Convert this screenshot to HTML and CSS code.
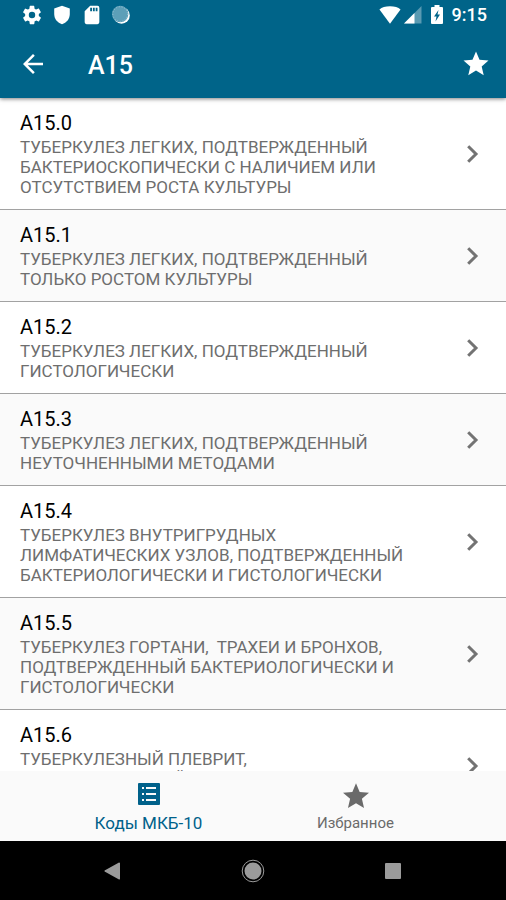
FILE: index.html
```html
<!DOCTYPE html>
<html lang="ru">
<head>
<meta charset="utf-8">
<meta name="viewport" content="width=device-width, initial-scale=1">
<title>A15</title>
<link rel="stylesheet" href="styles.css">
</head>
<body>
<header class="top">
  <div class="status">
    <div class="status-left">
      <svg class="status-icon" viewBox="0 0 24 24"><path d="M19.4 13c.04-.3.1-.65.1-1s-.06-.7-.1-1l2.1-1.65c.2-.15.25-.42.12-.64l-2-3.46c-.12-.22-.39-.3-.6-.22l-2.5 1c-.52-.4-1.08-.73-1.7-.98l-.37-2.65A.5.5 0 0 0 14 2h-4a.5.5 0 0 0-.5.42l-.37 2.65c-.62.25-1.18.58-1.7.98l-2.5-1a.5.5 0 0 0-.6.22l-2 3.46c-.13.22-.07.49.12.64L4.570 11c-.04.3-.07.65-.07 1s.03.7.07 1l-2.1 1.650c-.2.15-.25.42-.12.64l2 3.460c.12.22.39.3.6.22l2.5-1c.52.4 1.080.73 1.700.98l.37 2.650c.04.24.25.42.5.42h4c.25 0 .46-.18.5-.42l.37-2.650c.62-.25 1.180-.58 1.700-.98l2.500 1c.22.080.48 0 .6-.22l2-3.460c.13-.22.070-.49-.12-.64zM12 15.500a3.500 3.500 0 1 1 0-7 3.500 3.500 0 0 1 0 7z"/></svg>
      <svg class="status-icon" viewBox="0 0 24 24"><path d="M12 2 3.500 5v6c0 5.500 3.500 9.500 8.500 11 5-1.500 8.500-5.500 8.500-11V5z"/></svg>
      <svg class="status-icon" viewBox="0 0 24 24"><path d="M18 2h-8L4 8v12a2 2 0 0 0 2 2h12a2 2 0 0 0 2-2V4a2 2 0 0 0-2-2zm-6 6h-2V4h2zm3 0h-2V4h2zm3 0h-2V4h2z"/></svg>
      <svg class="status-icon" viewBox="3 2 24 24"><circle cx="14.500" cy="14.500" r="9"/><circle class="sync-disc" cx="13" cy="13" r="9"/><circle class="sync-ring" cx="13" cy="13" r="8"/></svg>
    </div>
    <div class="status-right">
      <svg class="signal-icon" viewBox="0 0 24 24"><path d="M12 21.500.5 6C3 3.800 7 2.500 12 2.500S21 3.800 23.500 6z"/></svg>
      <svg class="cell-icon" viewBox="0 0 18 18"><path class="faint" d="M17.500 0v17.500H0z"/><path d="M10.500 7v10.500H0z"/></svg>
      <svg class="battery-icon" viewBox="0 0 12 20"><path d="M3.500 0h5v2H11a1 1 0 0 1 1 1v15a1 1 0 0 1-1 1H1a1 1 0 0 1-1-1V3a1 1 0 0 1 1-1h2.500z"/><path class="bolt" d="M7.500 5 3 11.500h2.500L4.500 16.500 9 9.500H6.500z"/></svg>
      <span class="clock">9:15</span>
    </div>
  </div>
  <div class="appbar">
    <button class="icon-button" aria-label="Назад"><svg class="bar-icon" viewBox="0 0 24 24"><path d="M20 11H7.830l5.590-5.590L12 4l-8 8 8 8 1.410-1.410L7.830 13H20z"/></svg></button>
    <h1 class="title">A15</h1>
    <button class="icon-button" aria-label="В избранное"><svg class="bar-icon" viewBox="0 0 24 24"><path d="M12 17.270 18.180 21l-1.640-7.030L22 9.240l-7.190-.61L12 2 9.190 8.630 2 9.240l5.460 4.730L5.820 21z"/></svg></button>
  </div>
</header>

<main class="list">
  <a class="row" href="#a150"><div class="row-text"><div class="code">A15.0</div><div class="name">ТУБЕРКУЛЕЗ ЛЕГКИХ, ПОДТВЕРЖДЕННЫЙ БАКТЕРИОСКОПИЧЕСКИ С НАЛИЧИЕМ ИЛИ ОТСУТСТВИЕМ РОСТА КУЛЬТУРЫ</div></div><svg class="chevron" viewBox="0 0 12 18"><path d="m1.200 1.200 7.800 7.800-7.800 7.800"/></svg></a>
  <a class="row" href="#a151"><div class="row-text"><div class="code">A15.1</div><div class="name">ТУБЕРКУЛЕЗ ЛЕГКИХ, ПОДТВЕРЖДЕННЫЙ ТОЛЬКО РОСТОМ КУЛЬТУРЫ</div></div><svg class="chevron" viewBox="0 0 12 18"><path d="m1.200 1.200 7.800 7.800-7.800 7.800"/></svg></a>
  <a class="row" href="#a152"><div class="row-text"><div class="code">A15.2</div><div class="name">ТУБЕРКУЛЕЗ ЛЕГКИХ, ПОДТВЕРЖДЕННЫЙ ГИСТОЛОГИЧЕСКИ</div></div><svg class="chevron" viewBox="0 0 12 18"><path d="m1.200 1.200 7.800 7.800-7.800 7.800"/></svg></a>
  <a class="row" href="#a153"><div class="row-text"><div class="code">A15.3</div><div class="name">ТУБЕРКУЛЕЗ ЛЕГКИХ, ПОДТВЕРЖДЕННЫЙ НЕУТОЧНЕННЫМИ МЕТОДАМИ</div></div><svg class="chevron" viewBox="0 0 12 18"><path d="m1.200 1.200 7.800 7.800-7.800 7.800"/></svg></a>
  <a class="row" href="#a154"><div class="row-text"><div class="code">A15.4</div><div class="name">ТУБЕРКУЛЕЗ ВНУТРИГРУДНЫХ ЛИМФАТИЧЕСКИХ УЗЛОВ, ПОДТВЕРЖДЕННЫЙ БАКТЕРИОЛОГИЧЕСКИ И ГИСТОЛОГИЧЕСКИ</div></div><svg class="chevron" viewBox="0 0 12 18"><path d="m1.200 1.200 7.800 7.800-7.800 7.800"/></svg></a>
  <a class="row" href="#a155"><div class="row-text"><div class="code">A15.5</div><div class="name">ТУБЕРКУЛЕЗ ГОРТАНИ,  ТРАХЕИ И БРОНХОВ, ПОДТВЕРЖДЕННЫЙ БАКТЕРИОЛОГИЧЕСКИ И ГИСТОЛОГИЧЕСКИ</div></div><svg class="chevron" viewBox="0 0 12 18"><path d="m1.200 1.200 7.800 7.800-7.800 7.800"/></svg></a>
  <a class="row" href="#a156"><div class="row-text"><div class="code">A15.6</div><div class="name">ТУБЕРКУЛЕЗНЫЙ ПЛЕВРИТ, ПОДТВЕРЖДЕННЫЙ БАКТЕРИОЛОГИЧЕСКИ И ГИСТОЛОГИЧЕСКИ</div></div><svg class="chevron" viewBox="0 0 12 18"><path d="m1.200 1.200 7.800 7.800-7.800 7.800"/></svg></a>
</main>

<nav class="tabs">
  <a class="tab tab-active" href="#codes"><svg class="tab-icon" viewBox="0 0 26 26"><path fill-rule="evenodd" d="M3 1h20a1 1 0 0 1 1 1v20a1 1 0 0 1-1 1H3a1 1 0 0 1-1-1V2a1 1 0 0 1 1-1zM6 5v2h2V5zm4 0v2h10V5zm-4 6v2h2v-2zm4 0v2h10v-2zm-4 6v2h2v-2zm4 0v2h10v-2z"/></svg><span>Коды МКБ-10</span></a>
  <a class="tab" href="#favourites"><svg class="tab-icon" viewBox="2 1 20 20"><path d="M12 17.270 18.180 21l-1.640-7.030L22 9.240l-7.190-.61L12 2 9.190 8.630 2 9.240l5.460 4.730L5.820 21z"/></svg><span>Избранное</span></a>
</nav>

<footer class="system">
  <button class="key" aria-label="Назад"><svg class="key-icon" viewBox="0 0 24 24"><path d="M19 4v16a1 1 0 0 1-1 .5L4.500 13a1 1 0 0 1 0-2L18 3.500a1 1 0 0 1 1 .5z"/></svg></button>
  <button class="key" aria-label="Домой"><svg class="key-icon" viewBox="0 0 24 24"><circle cx="12" cy="12" r="8.500"/><circle class="key-ring" cx="12" cy="12" r="10.800"/></svg></button>
  <button class="key" aria-label="Обзор"><svg class="key-icon" viewBox="0 0 24 24"><rect x="4" y="4" width="16" height="16" rx="1"/></svg></button>
</footer>
</body>
</html>
```
FILE: styles.css
```css
* {
  box-sizing: border-box;
}

body {
  margin: 0;
  height: 100vh;
  display: flex;
  flex-direction: column;
  overflow: hidden;
  background: #fff;
  font-family: Roboto, "Liberation Sans", sans-serif;
}

svg {
  display: block;
  flex: none;
  fill: currentColor;
}

button {
  padding: 0;
  border: 0;
  background: none;
  color: inherit;
}

a {
  color: inherit;
  text-decoration: none;
}

.top {
  position: relative;
  flex: none;
  background: #006489;
  color: #fff;
  box-shadow: 0 1px 4px rgba(0, 0, 0, 0.5);
}

.status {
  display: flex;
  justify-content: space-between;
  height: 30px;
  padding: 0 19px 0 21px;
}

.status-left,
.status-right {
  display: flex;
  align-items: center;
}

.status-left {
  gap: 8px;
}

.status-icon {
  width: 22px;
  height: 22px;
}

.sync-disc {
  fill: #5d9fb8;
}

.sync-ring {
  fill: none;
  stroke: #a5cbd9;
  stroke-dasharray: 1 2;
}

.signal-icon {
  width: 22px;
  height: 22px;
  margin-right: 3px;
}

.cell-icon {
  width: 18px;
  height: 18px;
  margin-right: 9px;
}

.faint {
  opacity: 0.35;
}

.battery-icon {
  width: 12px;
  height: 20px;
  margin-right: 9px;
}

.bolt {
  fill: #006489;
}

.clock {
  font-size: 18px;
  font-weight: 500;
  line-height: 32px;
}

.appbar {
  display: flex;
  align-items: center;
  height: 68px;
  padding: 0 15px 0 18px;
}

.icon-button {
  flex: none;
}

.bar-icon {
  width: 30px;
  height: 30px;
}

.title {
  flex: 1;
  margin: 0;
  padding: 4px 0 0 40px;
  font-size: 25px;
  font-weight: 500;
  line-height: 30px;
}

.list {
  flex: 1;
  min-height: 0;
  overflow: hidden;
}

.row {
  display: flex;
  align-items: center;
  justify-content: space-between;
  padding: 13px 27px 12px 20px;
  border-bottom: 1px solid #a2a2a2;
  background: #fff;
}

.row:nth-child(even) {
  background: #fafafa;
}

.row-text {
  width: 390px;
}

.code {
  margin-bottom: 2px;
  color: #000;
  font-size: 20px;
  line-height: 24px;
}

.name {
  color: #6e6e6e;
  font-size: 17px;
  line-height: 20px;
  white-space: pre-wrap;
}

.chevron {
  width: 12px;
  height: 18px;
  fill: none;
  stroke: #737373;
  stroke-width: 3px;
}

.tabs {
  flex: none;
  display: flex;
  justify-content: center;
  height: 70px;
  padding-right: 2px;
  background: #fafafa;
  color: #6a6a6a;
  font-size: 15px;
}

.tab {
  display: flex;
  flex-direction: column;
  align-items: center;
  flex: 0 1 207px;
  padding-top: 11px;
  line-height: 30px;
}

.tab-active {
  color: #00618a;
  font-size: 17px;
}

.tab-icon {
  width: 26px;
  height: 26px;
}

.system {
  flex: none;
  display: flex;
  align-items: center;
  justify-content: center;
  gap: 116px;
  height: 59px;
  background: #000;
  color: #9b9b9b;
}

.key-icon {
  width: 24px;
  height: 24px;
}

.key-ring {
  fill: none;
  stroke: currentColor;
  stroke-width: 1px;
}
```
